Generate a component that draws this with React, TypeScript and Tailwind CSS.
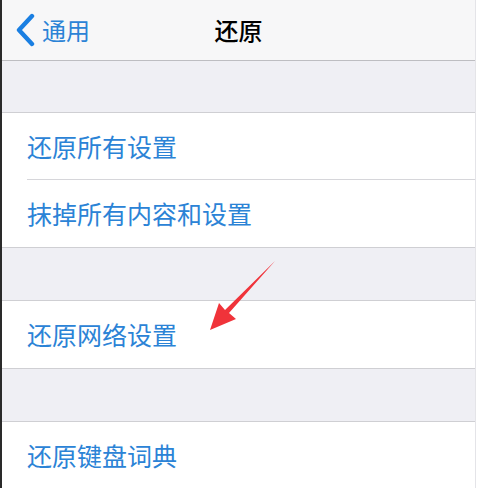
const font = { fontFamily: '"Noto Sans CJK SC", "Noto Sans", sans-serif' }

const Row = ({ label, last }: { label: string; last?: boolean }) => (
  <div className="relative h-[67px] bg-white flex items-center pl-[25px]">
    <span className="text-[25px] leading-none text-[#2b83d6]">{label}</span>
    {!last && <div className="absolute bottom-0 left-[25px] right-0 h-px bg-[#d6d6da]" />}
  </div>
)

const Gap = () => (
  <div className="h-[54px] bg-[#efeff4] border-y border-[#cfcfd3]" />
)

export default function App() {
  return (
    <div className="w-[483px] h-[488px] bg-white overflow-hidden flex" style={font}>
      <div className="relative w-[476px] border-l-2 border-[#2a2a2a] border-r border-r-[#e4e4e8]">
        <div className="h-[61px] bg-[#f7f7f8] border-b border-[#bdbdc1] relative flex items-center justify-center">
          <div className="absolute left-[12px] top-0 h-full flex items-center gap-[6px] text-[#1a7fe2]">
            <svg width="22" height="34" viewBox="0 0 22 34" fill="none">
              <path d="M18 3 L5 17 L18 31" stroke="currentColor" strokeWidth="4.4" strokeLinecap="round" strokeLinejoin="round" />
            </svg>
            <span className="text-[24px] leading-none text-[#2b83d6]">通用</span>
          </div>
          <span className="text-[24px] leading-none text-black font-medium">还原</span>
        </div>
        <div className="h-[52px] bg-[#efeff4] border-b border-[#cfcfd3]" />
        <Row label="还原所有设置" />
        <Row label="抹掉所有内容和设置" last />
        <Gap />
        <Row label="还原网络设置" last />
        <Gap />
        <Row label="还原键盘词典" />
        <svg className="absolute left-[200px] top-[255px]" width="80" height="85" viewBox="0 0 80 85">
          <polygon points="73,6 27,58 34,64 8,75 17,48 23,55" fill="#f0333a" />
        </svg>
      </div>
    </div>
  )
}
